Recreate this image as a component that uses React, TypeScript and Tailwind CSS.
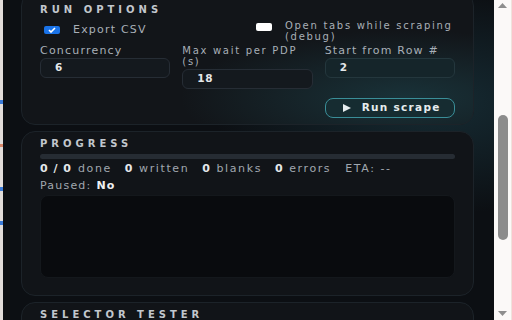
import React from "react";

const font = { fontFamily: '"DejaVu Sans", "Liberation Sans", sans-serif' };

function Check({ checked }: { checked: boolean }) {
  return checked ? (
    <div className="w-[16px] h-[8px] rounded-[2px] bg-[#1a73e8] flex items-center justify-center">
      <svg width="8" height="6" viewBox="0 0 8 6">
        <path d="M1 3 L3 5 L7 1" stroke="white" strokeWidth="1.6" fill="none" />
      </svg>
    </div>
  ) : (
    <div className="w-[16px] h-[8px] rounded-[2px] bg-white" />
  );
}

function Heading({ children }: { children: React.ReactNode }) {
  return (
    <div className="text-[10px] leading-[12px] font-bold tracking-[4px] text-[#c2c7cd]">{children}</div>
  );
}

function Field({
  label,
  value,
  teal,
  twoLine,
}: {
  label: React.ReactNode;
  value: string;
  teal?: boolean;
  twoLine?: boolean;
}) {
  return (
    <div className="flex flex-col">
      <div
        className={`text-[#a8afb7] mb-[2px] ${
          twoLine
            ? "text-[10px] leading-[11px] tracking-[1.7px]"
            : "text-[11px] leading-[11px] tracking-[1.2px]"
        }`}
      >
        {label}
      </div>
      <div
        className={`h-[20px] rounded-[6px] border flex items-center pl-[14px] text-[10.5px] font-bold tracking-[0.5px] text-[#e4e7ea] ${
          teal ? "bg-[#15252a] border-[#24373d]" : "bg-[#14191e] border-[#262d35]"
        }`}
      >
        {value}
      </div>
    </div>
  );
}

export default function App() {
  return (
    <div className="w-[512px] h-[320px] flex overflow-hidden bg-[#0d1014]" style={font}>
      <div className="w-[3px] flex flex-col bg-[#e2ddda]">
        <div className="h-[100px]" />
        <div className="h-[4px] bg-[#3b7bd8]" />
        <div className="h-[40px]" />
        <div className="h-[3px] bg-[#d9886b]" />
        <div className="h-[40px]" />
        <div className="h-[4px] bg-[#3b7bd8]" />
        <div className="h-[30px]" />
        <div className="h-[4px] bg-[#3b7bd8]" />
      </div>
      <div
        className="flex-1 overflow-hidden pl-[18px] pr-[20px]"
        style={{
          background:
            "radial-gradient(ellipse 320px 160px at 88% 32%, rgba(40,95,110,0.35), rgba(13,16,20,0) 70%), #0c0f13",
        }}
      >
        <div className="-mt-[8px] flex flex-col gap-[6px]">
          {/* Run options card */}
          <div
            className="rounded-[14px] border border-[#1c2329] pt-[11px] pb-[6px] px-[18px]"
            style={{
              background:
                "radial-gradient(ellipse 300px 90px at 85% 80%, rgba(35,90,100,0.42), rgba(18,22,26,0) 75%), #121519",
            }}
          >
            <Heading>RUN OPTIONS</Heading>
            <div className="flex mt-[4px] h-[20px]">
              <div className="w-[216px] flex items-center pl-[4px] gap-[13px]">
                <Check checked />
                <span className="text-[11px] tracking-[1.2px] text-[#a8afb7]">Export CSV</span>
              </div>
              <div className="flex items-start gap-[13px]">
                <div className="mt-[3px]">
                  <Check checked={false} />
                </div>
                <div className="text-[10px] leading-[10.5px] tracking-[1.7px] text-[#a8afb7] pt-[1px]">
                  Open tabs while scraping
                  <br />
                  (debug)
                </div>
              </div>
            </div>
            <div className="grid grid-cols-3 gap-x-[12px] mt-[5px]">
              <Field label="Concurrency" value="6" />
              <Field
                twoLine
                label={
                  <>
                    Max wait per PDP
                    <br />
                    (s)
                  </>
                }
                value="18"
              />
              <Field label="Start from Row #" value="2" teal />
              <div />
              <div />
              <div className="mt-[9px] h-[20px] rounded-[8px] border-[1.5px] border-[#3a8e98] bg-[#162c31] flex items-center pl-[17px] gap-[11px] text-[10.5px] font-bold tracking-[1.3px] text-[#e6ecee]">
                <svg width="8" height="8" viewBox="0 0 8 8">
                  <path d="M0 0 L8 4 L0 8 Z" fill="#e6ecee" />
                </svg>
                <span>Run scrape</span>
              </div>
            </div>
          </div>

          {/* Progress card */}
          <div className="rounded-[14px] border border-[#1c2329] bg-[#111418] pt-[6px] pb-[17px] px-[18px]">
            <Heading>PROGRESS</Heading>
            <div className="mt-[4px] h-[5px] rounded-full bg-[#262c33]" />
            <div className="mt-[3px] flex items-center text-[11px] tracking-[1.6px] text-[#a0a7af] h-[14px]">
              <span className="font-bold text-[#e4e7ea] tracking-[1px]">0 / 0</span>
              <span className="ml-[6px]">done</span>
              <span className="ml-[13px] font-bold text-[#e4e7ea]">0</span>
              <span className="ml-[5px]">written</span>
              <span className="ml-[13px] font-bold text-[#e4e7ea]">0</span>
              <span className="ml-[5px]">blanks</span>
              <span className="ml-[13px] font-bold text-[#e4e7ea]">0</span>
              <span className="ml-[5px]">errors</span>
              <span className="ml-[14px]">ETA: --</span>
            </div>
            <div className="mt-[3px] h-[14px] flex items-center text-[11px] tracking-[1.2px] text-[#a0a7af]">
              Paused:<span className="ml-[5px] font-bold text-[#eef0f2]">No</span>
            </div>
            <div className="mt-[2px] h-[83px] rounded-[8px] bg-[#090b0e] border border-[#14181c]" />
          </div>

          {/* Selector tester card */}
          <div className="rounded-[14px] border border-[#1c2329] bg-[#111418] pt-[6px] pb-[20px] px-[18px]">
            <Heading>SELECTOR TESTER</Heading>
          </div>
        </div>
      </div>
      {/* Scrollbar */}
      <div className="w-[18px] bg-[#fbf9f8] border-r border-[#f0e2dc] flex flex-col items-center">
        <svg width="9" height="5" viewBox="0 0 9 5" className="mt-[3px]">
          <path d="M0 5 L4.5 0 L9 5 Z" fill="#8e8e8e" />
        </svg>
        <div className="mt-[107px] w-[10px] h-[125px] rounded-[5px] bg-[#8c8c8c]" />
        <div className="flex-1" />
        <svg width="9" height="5" viewBox="0 0 9 5" className="mb-[4px]">
          <path d="M0 0 L4.5 5 L9 0 Z" fill="#8e8e8e" />
        </svg>
      </div>
    </div>
  );
}
